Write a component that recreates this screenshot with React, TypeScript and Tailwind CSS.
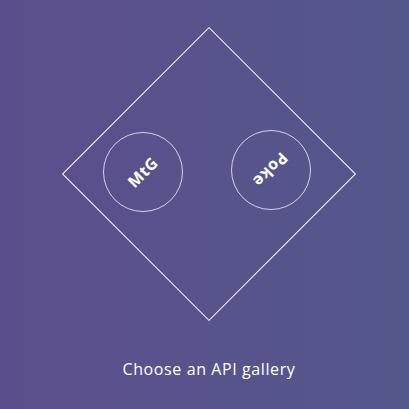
import React from "react";

export default function App() {
  return (
    <div
      className="w-[409px] h-[409px] flex flex-col items-center pl-[9px] bg-gradient-to-r from-[#5c4e8c] to-[#53588b] text-white"
      style={{ fontFamily: '"Open Sans", "Noto Sans", sans-serif' }}
    >
      <div className="relative w-[292px] h-[292px] mt-[28px]">
        <div className="absolute left-[42px] top-[42px] w-[208px] h-[208px] border border-white rotate-45" />
        <div className="absolute left-[40px] top-[104px] w-[80px] h-[80px] rounded-full border-[1.5px] border-[#d6d3e2] flex items-center justify-center">
          <span className="-rotate-45 text-[16px] font-bold tracking-[0.5px]">MtG</span>
        </div>
        <div className="absolute left-[168px] top-[102px] w-[80px] h-[80px] rounded-full border-[1.5px] border-[#d6d3e2] flex items-center justify-center">
          <span className="rotate-[135deg] text-[16px] font-bold tracking-[0.5px]">Poke</span>
        </div>
      </div>
      <div className="mt-[39px] text-[16px] font-medium tracking-[0.6px] leading-[20px]">Choose an API gallery</div>
    </div>
  );
}
